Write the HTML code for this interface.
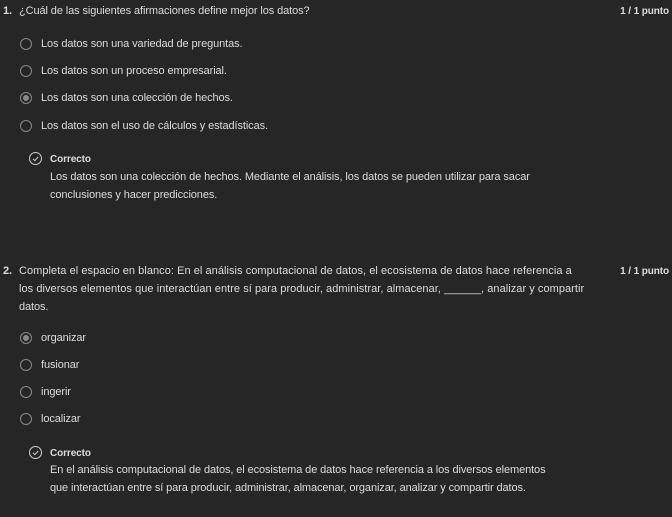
<!DOCTYPE html>
<html><head><meta charset="utf-8"><style>
body{margin:0;width:672px;height:517px;background:#262626;color:#dcdcdc;font-family:"Liberation Sans",sans-serif;font-size:11px;letter-spacing:-0.1px;position:relative;overflow:hidden}
.l{position:absolute;white-space:nowrap;line-height:14px}
.b{font-weight:bold}
.r{position:absolute;width:10px;height:10px;border:1.5px solid #8a8a8a;border-radius:50%}
.r.s::after{content:"";position:absolute;left:2px;top:2px;width:6px;height:6px;border-radius:50%;background:#8a8a8a}
.c{position:absolute;width:11px;height:11px;border:1px solid #cfcfcf;border-radius:50%}
</style></head><body>
<div class="l b" style="left:3px;top:4px">1.</div>
<div class="l" style="left:19px;top:4px">¿Cuál de las siguientes afirmaciones define mejor los datos?</div>
<div class="l b" style="right:3px;top:5px;font-size:10px">1 / 1 punto</div>
<div class="r" style="left:20px;top:38px"></div><div class="l" style="left:41px;top:37px">Los datos son una variedad de preguntas.</div>
<div class="r" style="left:20px;top:65px"></div><div class="l" style="left:41px;top:64px">Los datos son un proceso empresarial.</div>
<div class="r s" style="left:20px;top:92px"></div><div class="l" style="left:41px;top:91px">Los datos son una colección de hechos.</div>
<div class="r" style="left:20px;top:120px"></div><div class="l" style="left:41px;top:119px">Los datos son el uso de cálculos y estadísticas.</div>
<div class="c" style="left:29px;top:152px"><svg width="11" height="11" viewBox="0 0 11 11"><path d="M3 5.8l1.8 1.8 3.4-3.6" fill="none" stroke="#cfcfcf" stroke-width="1"/></svg></div>
<div class="l b" style="left:50px;top:153px;font-size:10px">Correcto</div>
<div class="l" style="left:50px;top:170px">Los datos son una colección de hechos. Mediante el análisis, los datos se pueden utilizar para sacar</div>
<div class="l" style="left:50px;top:188px">conclusiones y hacer predicciones.</div>

<div class="l b" style="left:3px;top:264px">2.</div>
<div class="l" style="left:19px;top:264px;letter-spacing:0.05px">Completa el espacio en blanco: En el análisis computacional de datos, el ecosistema de datos hace referencia a</div>
<div class="l b" style="right:3px;top:265px;font-size:10px">1 / 1 punto</div>
<div class="l" style="left:19px;top:282px;letter-spacing:0.05px">los diversos elementos que interactúan entre sí para producir, administrar, almacenar, ______, analizar y compartir</div>
<div class="l" style="left:19px;top:300px">datos.</div>
<div class="r s" style="left:20px;top:332px"></div><div class="l" style="left:41px;top:331px">organizar</div>
<div class="r" style="left:20px;top:359px"></div><div class="l" style="left:41px;top:358px">fusionar</div>
<div class="r" style="left:20px;top:386px"></div><div class="l" style="left:41px;top:385px">ingerir</div>
<div class="r" style="left:20px;top:413px"></div><div class="l" style="left:41px;top:412px">localizar</div>
<div class="c" style="left:29px;top:446px"><svg width="11" height="11" viewBox="0 0 11 11"><path d="M3 5.8l1.8 1.8 3.4-3.6" fill="none" stroke="#cfcfcf" stroke-width="1"/></svg></div>
<div class="l b" style="left:50px;top:447px;font-size:10px">Correcto</div>
<div class="l" style="left:50px;top:463px">En el análisis computacional de datos, el ecosistema de datos hace referencia a los diversos elementos</div>
<div class="l" style="left:50px;top:481px">que interactúan entre sí para producir, administrar, almacenar, organizar, analizar y compartir datos.</div>
</body></html>
